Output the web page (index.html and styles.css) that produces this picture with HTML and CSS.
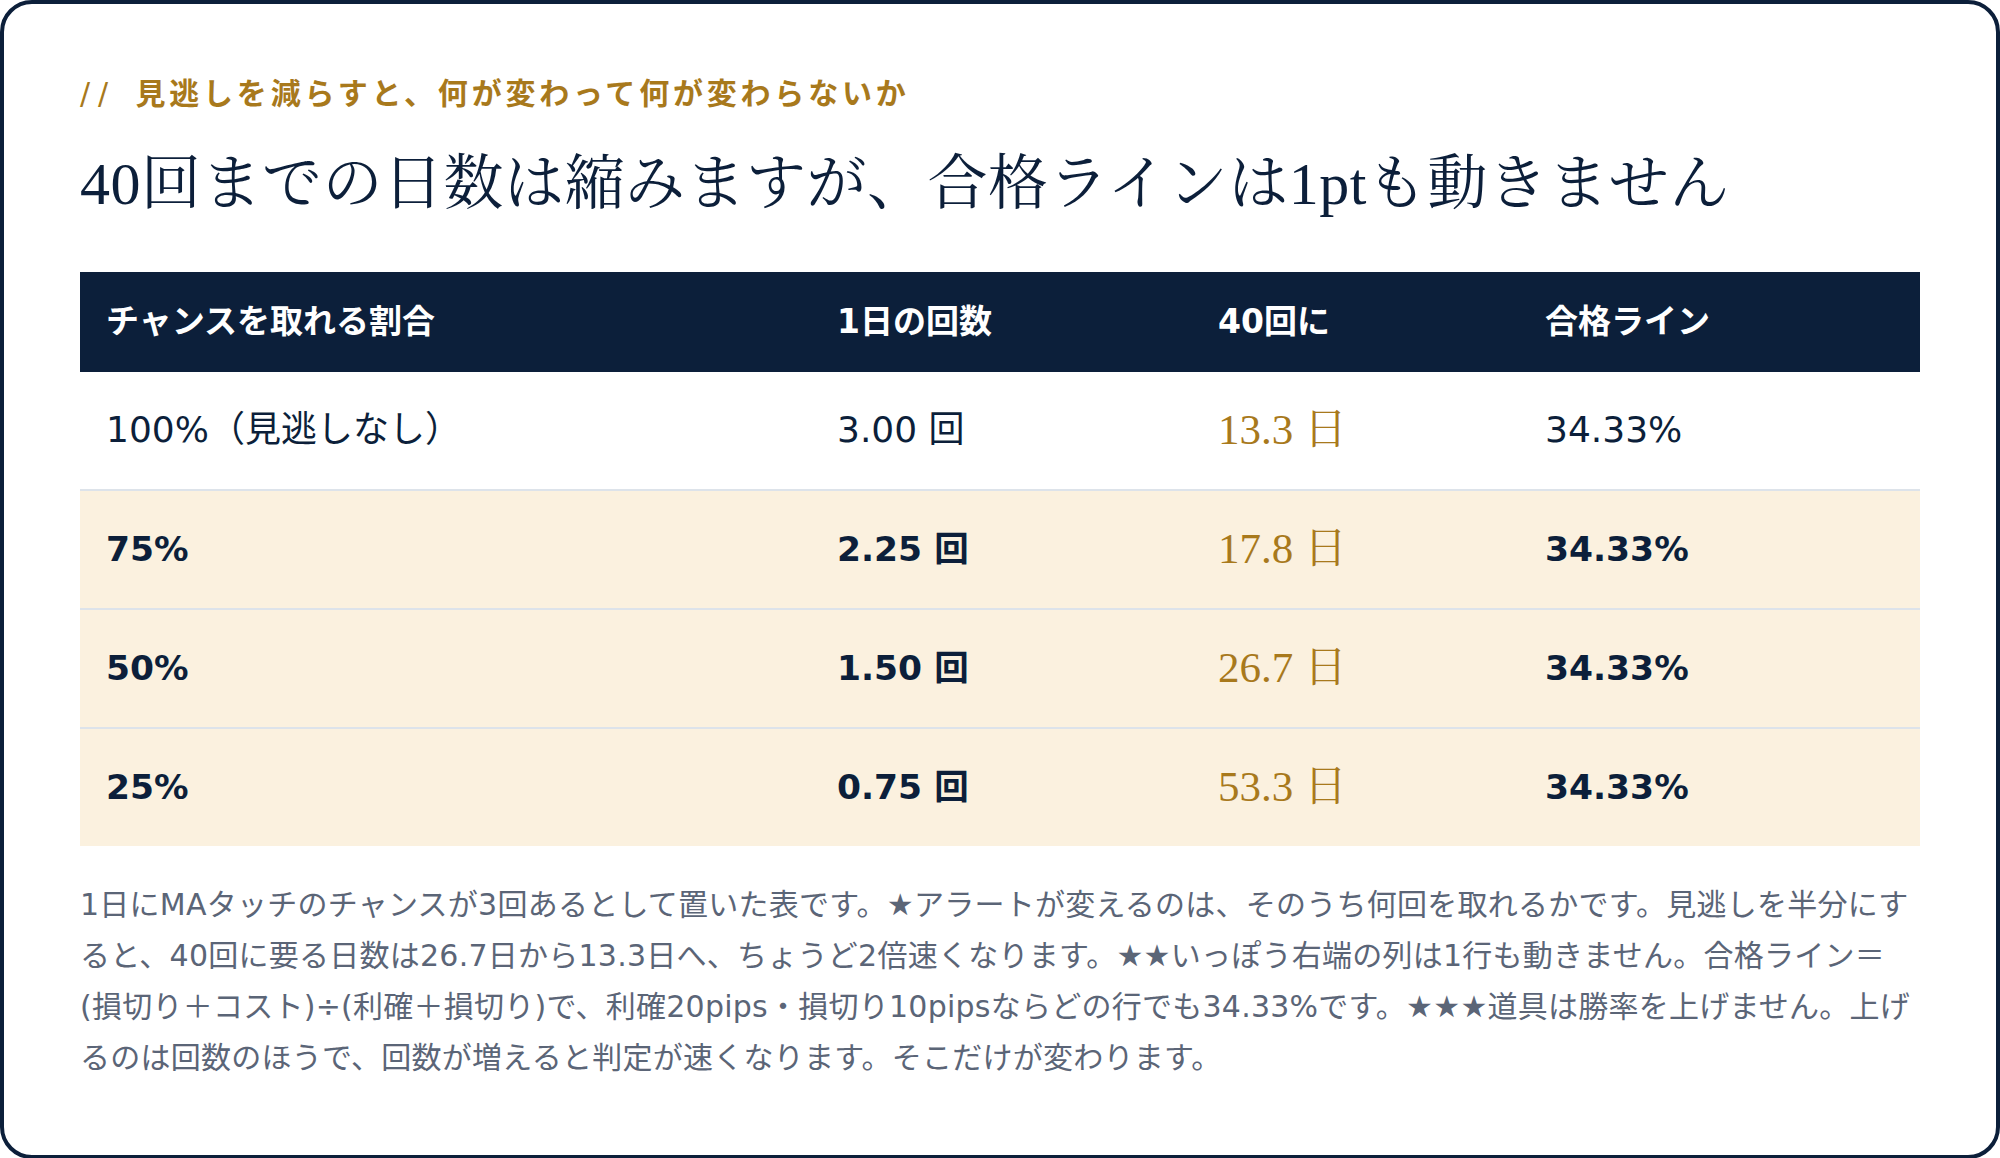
FILE: index.html
```html
<!DOCTYPE html>
<html lang="ja">
<head>
    <meta charset="UTF-8">
    <meta name="viewport" content="width=device-width, initial-scale=1.0">
    <title>見逃しと合格ライン</title>
    <link rel="stylesheet" href="styles.css">
</head>
<body>
    <section class="card">
        <p class="eyebrow"><span class="slash">//</span> 見逃しを減らすと、何が変わって何が変わらないか</p>
        <h1>40回までの日数は縮みますが、合格ラインは1ptも動きません</h1>

        <table class="rate-table">
            <colgroup>
                <col class="c1">
                <col class="c2">
                <col class="c3">
                <col class="c4">
            </colgroup>
            <thead>
                <tr>
                    <th>チャンスを取れる割合</th>
                    <th>1日の回数</th>
                    <th>40回に</th>
                    <th>合格ライン</th>
                </tr>
            </thead>
            <tbody>
                <tr>
                    <td>100%（見逃しなし）</td>
                    <td>3.00 回</td>
                    <td class="days">13.3 日</td>
                    <td>34.33%</td>
                </tr>
                <tr class="hl">
                    <td>75%</td>
                    <td>2.25 回</td>
                    <td class="days">17.8 日</td>
                    <td>34.33%</td>
                </tr>
                <tr class="hl">
                    <td>50%</td>
                    <td>1.50 回</td>
                    <td class="days">26.7 日</td>
                    <td>34.33%</td>
                </tr>
                <tr class="hl">
                    <td>25%</td>
                    <td>0.75 回</td>
                    <td class="days">53.3 日</td>
                    <td>34.33%</td>
                </tr>
            </tbody>
        </table>

        <p class="note">1日にMAタッチのチャンスが3回あるとして置いた表です。★アラートが変えるのは、そのうち何回を取れるかです。見逃しを半分にすると、40回に要る日数は26.7日から13.3日へ、ちょうど2倍速くなります。★★いっぽう右端の列は1行も動きません。合格ライン＝(損切り＋コスト)÷(利確＋損切り)で、利確20pips・損切り10pipsならどの行でも34.33%です。★★★道具は勝率を上げません。上げるのは回数のほうで、回数が増えると判定が速くなります。そこだけが変わります。</p>
    </section>
</body>
</html>
```

FILE: styles.css
```css
* {
    margin: 0;
    padding: 0;
    box-sizing: border-box;
}

body {
    background: #fff;
    color: #0c1f3a;
    font-family: 'DejaVu Sans', 'Noto Sans CJK JP', sans-serif;
}

/* Card */
.card {
    border: 4px solid #0c1f3a;
    border-radius: 32px;
    padding: 67px 76px 72px;
    min-height: 1158px;
}

.eyebrow {
    font-size: 30px;
    line-height: 1.5;
    font-weight: bold;
    letter-spacing: 3.8px;
    color: #a8791c;
}

.eyebrow .slash {
    font-weight: normal;
    letter-spacing: 8px;
    margin-right: 5px;
}

h1 {
    margin-top: 29px;
    font-family: 'Liberation Serif', 'Noto Serif CJK JP', serif;
    font-weight: normal;
    font-size: 60px;
    line-height: 1.3;
    letter-spacing: 0.5px;
    color: #0c1f3a;
}

/* Table */
.rate-table {
    width: 100%;
    margin-top: 49px;
    border-collapse: collapse;
    table-layout: fixed;
}

.rate-table .c1 { width: 731px; }
.rate-table .c2 { width: 381px; }
.rate-table .c3 { width: 327px; }
.rate-table .c4 { width: 401px; }

.rate-table th {
    background: #0c1f3a;
    color: #fff;
    text-align: left;
    font-size: 33px;
    font-weight: bold;
    line-height: 46px;
    padding: 27px 26px;
}

.rate-table td {
    font-size: 36px;
    line-height: 52px;
    padding: 32px 26px 33px;
    border-bottom: 2px solid #dde3ea;
}

.rate-table tr:last-child td {
    border-bottom: none;
}

.rate-table tr.hl td {
    background: #fbf1df;
    font-weight: bold;
    font-size: 34.5px;
}

.rate-table td.days,
.rate-table tr.hl td.days {
    font-family: 'Liberation Serif', 'Noto Serif CJK JP', serif;
    font-weight: normal;
    font-size: 43px;
    color: #a8791c;
}

/* Note */
.note {
    margin-top: 33px;
    font-size: 30px;
    line-height: 1.7;
    letter-spacing: 0.25px;
    color: #5b6577;
}
```
